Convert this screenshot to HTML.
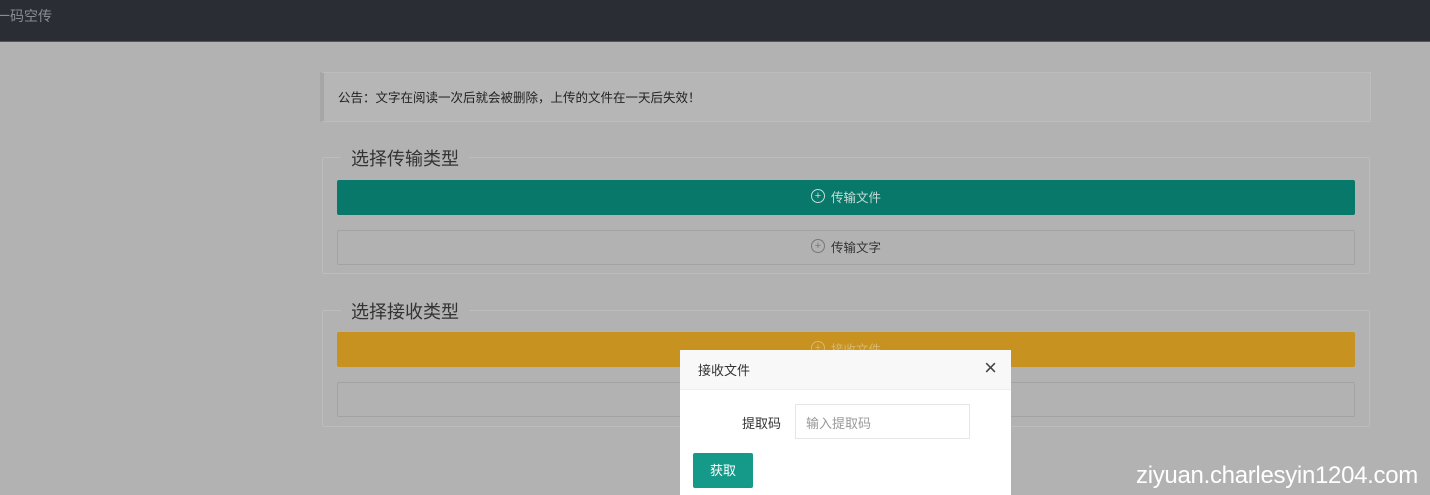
<!DOCTYPE html>
<html><head><meta charset="utf-8"><style>
*{margin:0;padding:0;box-sizing:border-box}
body{width:1430px;height:495px;overflow:hidden;background:#b2b2b2;font-family:"Liberation Sans","Noto Sans CJK SC",sans-serif;position:relative;color:#333}
.abs{position:absolute}
.hdr{left:0;top:0;width:1430px;height:42px;background:#2b2d35;border-bottom:1px solid #555}
.hdr span{position:absolute;left:-4px;top:6px;color:#8a8b90;font-size:14px}
.notice{left:320px;top:72px;width:1051px;height:50px;background:#b6b6b6;border:1px solid #bdbdbd;border-left:4px solid #a6a6a6;font-size:12.5px;color:#222;padding:14px 0 0 14px}
.fs{left:322px;width:1048px;height:117px;border:1px solid #bdbdbd;border-radius:2px}
.lg{position:absolute;left:18px;top:-13px;background:#b2b2b2;padding:0 10px;font-size:18px;color:#333}
.btn{left:337px;width:1018px;height:35px;border-radius:2px;font-size:12.5px;display:flex;align-items:center;justify-content:center;gap:6px;padding-bottom:3px}
.ic{width:14px;height:14px;border:1px solid currentColor;border-radius:50%;display:inline-flex;align-items:center;justify-content:center;font-size:11px;line-height:1}
.modal{left:680px;top:350px;width:331px;height:145px;background:#fff}
.mh{height:40px;background:#f8f8f8;border-bottom:1px solid #eee;font-size:13px;padding:10px 0 0 18px;position:relative}
.mh b{position:absolute;right:14px;top:5px;font-weight:normal;font-size:22px;color:#444}
</style></head><body>
<div class="abs hdr"><span>一码空传</span></div>
<div class="abs notice">公告：文字在阅读一次后就会被删除，上传的文件在一天后失效！</div>
<div class="abs fs" style="top:157px"><div class="lg">选择传输类型</div></div>
<div class="abs btn" style="top:180px;background:#08786a;color:#c8dcd8"><span class="ic">+</span>传输文件</div>
<div class="abs btn" style="top:230px;border:1px solid #a2a2a2;color:#333"><span class="ic" style="color:#777">+</span>传输文字</div>
<div class="abs fs" style="top:310px"><div class="lg">选择接收类型</div></div>
<div class="abs btn" style="top:332px;background:#c89220;color:#d8b870"><span class="ic">+</span>接收文件</div>
<div class="abs btn" style="top:382px;border:1px solid #a2a2a2"></div>
<div class="abs modal">
<div class="mh">接收文件<b>×</b></div>
<div class="abs" style="left:62px;top:63px;font-size:13px;color:#333">提取码</div>
<div class="abs" style="left:115px;top:54px;width:175px;height:35px;border:1px solid #e6e6e6;font-size:13px;color:#999;padding:8px 0 0 10px">输入提取码</div>
<div class="abs" style="left:13px;top:103px;width:60px;height:35px;background:#159a8a;color:#fff;font-size:13px;border-radius:2px;display:flex;align-items:center;justify-content:center;padding-bottom:3px">获取</div>
</div>
<div class="abs" style="left:1136px;top:462px;color:#fff;font-size:24px;letter-spacing:-0.3px">ziyuan.charlesyin1204.com</div>
</body></html>
